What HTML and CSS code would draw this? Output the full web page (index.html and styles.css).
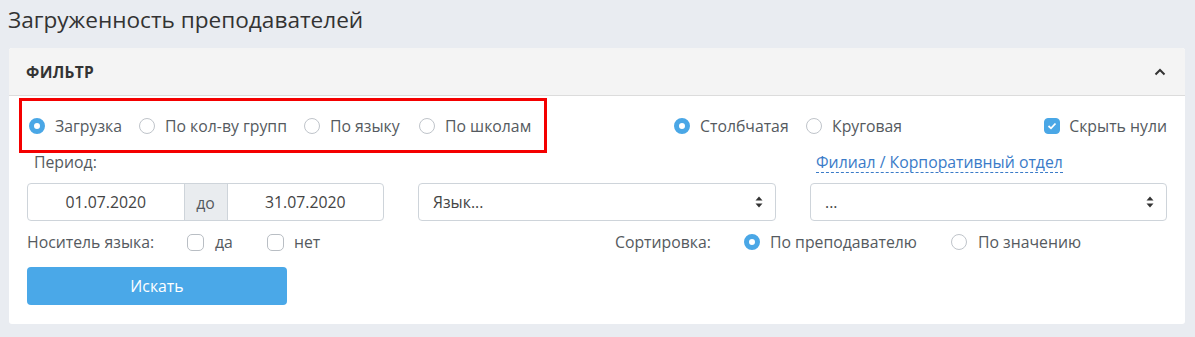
FILE: index.html
```html
<!DOCTYPE html>
<html lang="ru">
<head>
<meta charset="utf-8">
<title>Загруженность преподавателей</title>
<link rel="stylesheet" href="styles.css">
</head>
<body>
<h1 class="page-title">Загруженность преподавателей</h1>
<div class="card">
  <div class="card-header">
    <span class="card-title">ФИЛЬТР</span>
    <svg class="chevron" width="12" height="8" viewBox="0 0 12 8"><path d="M1.5 6.5 L6 2 L10.5 6.5" fill="none" stroke="#333" stroke-width="2"/></svg>
  </div>
  <div class="card-body">
    <div class="row row-modes">
      <div class="mode-box">
        <label class="opt w110"><span class="radio on"></span>Загрузка</label>
        <label class="opt w165"><span class="radio"></span>По кол-ву групп</label>
        <label class="opt w115"><span class="radio"></span>По языку</label>
        <label class="opt"><span class="radio"></span>По школам</label>
      </div>
      <div class="chart-type">
        <label class="opt w132"><span class="radio on"></span>Столбчатая</label>
        <label class="opt"><span class="radio"></span>Круговая</label>
      </div>
      <label class="opt hide-zero"><span class="check on"><svg width="10" height="8" viewBox="0 0 10 8"><path d="M1.5 4 L4 6.3 L8.5 1.5" fill="none" stroke="#fff" stroke-width="1.8"/></svg></span>Скрыть нули</label>
    </div>
    <div class="grid3 row-labels">
      <span class="label period">Период:</span>
      <span></span>
      <a class="branch-link">Филиал / Корпоративный отдел</a>
    </div>
    <div class="grid3 row-inputs">
      <div class="date-group">
        <div class="date-input">01.07.2020</div>
        <div class="addon">до</div>
        <div class="date-input">31.07.2020</div>
      </div>
      <div class="select"><span>Язык...</span><svg class="arrows" width="8" height="12" viewBox="0 0 8 12"><path d="M4 0.5 L7.5 4.5 H0.5 Z M4 11.5 L7.5 7.5 H0.5 Z" fill="#333"/></svg></div>
      <div class="select"><span>...</span><svg class="arrows" width="8" height="12" viewBox="0 0 8 12"><path d="M4 0.5 L7.5 4.5 H0.5 Z M4 11.5 L7.5 7.5 H0.5 Z" fill="#333"/></svg></div>
    </div>
    <div class="row row-options">
      <div class="native">
        <span class="label native-label">Носитель языка:</span>
        <label class="opt w80 gap-yes"><span class="check big"></span>да</label>
        <label class="opt gap-no"><span class="check big"></span>нет</label>
      </div>
      <div class="sort">
        <span class="label sort-label">Сортировка:</span>
        <label class="opt w207"><span class="radio on"></span>По преподавателю</label>
        <label class="opt gap-value"><span class="radio"></span>По значению</label>
      </div>
    </div>
    <div class="row row-button">
      <button class="btn">Искать</button>
    </div>
  </div>
</div>
</body>
</html>
```

FILE: styles.css
```css
* { box-sizing: border-box; }
html, body { margin: 0; padding: 0; }
body {
  background: #e9ecf1;
  font-family: "Open Sans", "Liberation Sans", sans-serif;
  color: #555a60;
  font-size: 15.8px;
  width: 1195px;
  height: 337px;
  overflow: hidden;
}
.page-title {
  margin: 0;
  padding: 4px 0 0 8px;
  height: 48px;
  font-size: 22.6px;
  font-weight: 400;
  color: #333;
  line-height: 32px;
}
.card {
  margin-left: 9px;
  width: 1176px;
  background: #fff;
  border-radius: 3px;
}
.card-header {
  height: 48px;
  background: #f4f4f4;
  border-bottom: 1px solid #dcdcdc;
  display: flex;
  align-items: center;
  justify-content: space-between;
  padding: 0 19px 0 17px;
  border-radius: 3px 3px 0 0;
}
.card-title {
  font-weight: 700;
  font-size: 15.5px;
  color: #333;
  letter-spacing: 0.3px;
}
.chevron { margin-top: 1px; }
.card-body {
  padding: 2px 18px 19px 18px;
}
.row { display: flex; align-items: center; }
.grid3 {
  display: grid;
  grid-template-columns: 357px 358px 357px;
  column-gap: 34px;
}
.row-modes { height: 55px; }
.mode-box {
  margin-left: -8px;
  width: 528px;
  height: 55px;
  border: 3px solid #f40000;
  display: flex;
  align-items: center;
  padding-left: 7px;
}
.opt {
  display: flex;
  align-items: center;
  gap: 10px;
  white-space: nowrap;
  flex: none;
}
.w110 { width: 110px; }
.w165 { width: 165px; }
.w115 { width: 115px; }
.w132 { width: 132px; }
.w80 { width: 80px; }
.w207 { width: 207px; }
.radio {
  width: 16px;
  height: 16px;
  border-radius: 50%;
  border: 1px solid #bfc4ca;
  background: #fff;
  flex: none;
}
.radio.on {
  border: 5px solid #4aa7e6;
  background: #fff;
}
.check {
  width: 16px;
  height: 16px;
  border-radius: 4px;
  border: 1px solid #b9bec4;
  background: #fff;
  flex: none;
  display: flex;
  align-items: center;
  justify-content: center;
}
.check.big {
  width: 17px;
  height: 17px;
  border-radius: 5px;
}
.check.on {
  background: #4aa7e6;
  border-color: #4aa7e6;
}
.chart-type {
  display: flex;
  margin-left: 127px;
}
.hide-zero { margin-left: auto; gap: 9px; }
.row-labels { height: 30px; align-items: start; }
.period { margin-left: 7px; line-height: 18px; }
.branch-link {
  justify-self: start;
  margin-left: 6px;
  color: #3a7bc8;
  line-height: 18px;
  padding-bottom: 1px;
  border-bottom: 1px dashed #3a7bc8;
  cursor: pointer;
}
.row-inputs { height: 38px; }
.date-group {
  height: 38px;
  display: flex;
  border: 1px solid #ced4da;
  border-radius: 4px;
  overflow: hidden;
}
.date-input {
  flex: 1;
  display: flex;
  align-items: center;
  justify-content: center;
  color: #444;
}
.addon {
  width: 44px;
  flex: none;
  background: #e9ecef;
  border-left: 1px solid #ced4da;
  border-right: 1px solid #ced4da;
  display: flex;
  align-items: center;
  justify-content: center;
  padding-top: 2px;
}
.select {
  height: 38px;
  border: 1px solid #ced4da;
  border-radius: 4px;
  display: flex;
  align-items: center;
  justify-content: space-between;
  padding: 0 12px 0 14px;
  color: #444;
}
.row-options { height: 42px; margin-bottom: 4px; }
.native { display: flex; align-items: center; width: 588px; flex: none; }
.native-label { width: 160px; flex: none; }
.gap-yes { gap: 11px; }
.gap-no { gap: 10px; }
.sort { display: flex; align-items: center; }
.sort-label { width: 129px; flex: none; }
.gap-value { gap: 11px; }
.row-button { height: 38px; }
.btn {
  width: 260px;
  height: 38px;
  background: #4aa8e8;
  border: none;
  border-radius: 4px;
  color: #fff;
  font-family: "Open Sans", "Liberation Sans", sans-serif;
  font-size: 15.8px;
}
```
